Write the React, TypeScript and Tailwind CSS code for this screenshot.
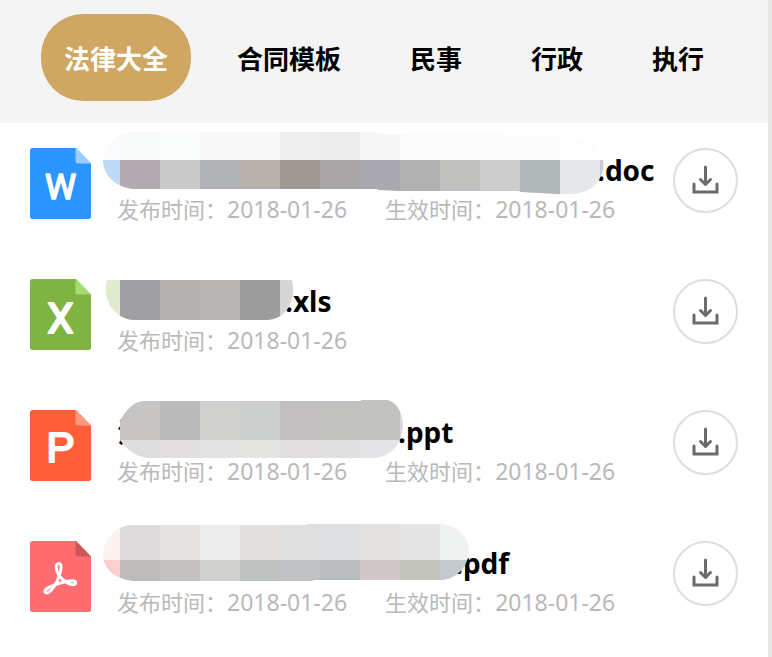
import { useId, useState } from "react";

type Kind = "doc" | "xls" | "ppt" | "pdf";

type Band = { y: number; height: number; colors: string[] };

type Mosaic = {
  x: number;
  y: number;
  width: number;
  outline: string;
  bands: Band[];
};

type LegalFile = {
  kind: Kind;
  lead?: string;
  published: string;
  effective?: string;
  mosaic: Mosaic;
};

const TABS = ["法律大全", "合同模板", "民事", "行政", "执行"];

const FILES: LegalFile[] = [
  {
    kind: "doc",
    published: "2018-01-26",
    effective: "2018-01-26",
    mosaic: {
      x: 103,
      y: 132,
      width: 501,
      outline:
        "M103 162C103 145 118 132 134 132H375L384 134H404L410 135H500L575 138C590 139 599 148 603 160C606 178 592 194 572 194L558 194L521 192L518 191H400L378 190V189H133C116 187 104 176 103 162Z",
      bands: [
        {
          y: 130,
          height: 30,
          colors: ["#fafbfd", "#fafbfd", "#f8f9f9", "#fafdfb", "#f8f8f8", "#f8f8f8", "#efefef", "#ededed", "#f7f7f7", "#fbfbfb", "#fbfbfb", "#fbfbfb", "#fcfcfc", "#fdfdfd"].slice(1),
        },
        {
          y: 160,
          height: 40,
          colors: ["#bfdaf7", "#b1abaf", "#c9c9c9", "#b1b2b5", "#b6b1ab", "#a09a95", "#a8a5a6", "#aaa9af", "#b0b0b0", "#c0c0be", "#cdcdcd", "#b0b5b8", "#e6e7e9", "#cccccc"],
        },
      ],
    },
  },
  {
    kind: "xls",
    published: "2018-01-26",
    mosaic: {
      x: 105,
      y: 263,
      width: 189,
      outline: "M107 280H292C296 296 290 318 268 320H132C113 317 102 300 107 280Z",
      bands: [
        {
          y: 280,
          height: 40,
          colors: ["#e0ebd0", "#9f9fa1", "#b1b0ae", "#b5b4b2", "#9d9d9d", "#d6d6d6"],
        },
      ],
    },
  },
  {
    kind: "ppt",
    lead: "法",
    published: "2018-01-26",
    effective: "2018-01-26",
    mosaic: {
      x: 119,
      y: 394,
      width: 284,
      outline:
        "M120 421C126 409 134 402 143 401H360L362 400H388C397 403 403 413 403 426C402 443 392 456 376 458H148C136 457 126 449 120 440Z",
      bands: [
        {
          y: 400,
          height: 40,
          colors: ["#c6c5c3", "#c6c5c3", "#bababa", "#d0d0ce", "#cdcfce", "#c1bfbf", "#c1c1bf", "#c2c2bf", "#d8d8d8"],
        },
        {
          y: 440,
          height: 20,
          colors: ["#dddddd", "#dddddd", "#e1dfe0", "#e3e3e3", "#e5e5e3", "#e0dedf", "#e0e0e0", "#e5e5e7", "#e5e5e7"],
        },
      ],
    },
  },
  {
    kind: "pdf",
    published: "2018-01-26",
    effective: "2018-01-26",
    mosaic: {
      x: 103,
      y: 525,
      width: 367,
      outline:
        "M103 554C104 538 116 526 131 525H306L308 524H442C460 526 470 539 469 553C467 567 457 579 442 580H314L312 581H133C115 579 103 569 103 554Z",
      bands: [
        {
          y: 520,
          height: 40,
          colors: ["#fcf2f1", "#dcdadb", "#e5e4e2", "#ececec", "#e1e0de", "#dfdfdf", "#dfe0e2", "#e3e2e0", "#e6e6e6", "#f0f2f1"],
        },
        {
          y: 560,
          height: 24,
          colors: ["#fdcfcf", "#bdbcba", "#c3c1c0", "#d0d0ce", "#bdc1c0", "#c1c2c4", "#b9bdc0", "#cec9c8", "#c4c4bf", "#c6c9ce"],
        },
      ],
    },
  },
];

const LEADING: Record<Kind, string> = {
  doc: "-ml-[14px] -mr-[7px]",
  xls: "-ml-[12px] -mr-[9px]",
  ppt: "-ml-[26px] -mr-[5px]",
  pdf: "-ml-[14px] -mr-[15px]",
};

const PAGE: Record<Kind, { body: string; fold: string }> = {
  doc: { body: "#2b96ff", fold: "#99ceff" },
  xls: { body: "#7fb442", fold: "#a8dc70" },
  ppt: { body: "#ff5e3a", fold: "#ff9880" },
  pdf: { body: "#ff6d70", fold: "#cc5659" },
};

function Redaction({ mosaic, className }: { mosaic: Mosaic; className: string }) {
  const clip = useId();
  return (
    <svg
      aria-hidden="true"
      className={`relative z-10 -mt-[18px] h-16 shrink-0 overflow-visible ${className}`}
      width={mosaic.width}
      height={64}
      viewBox={`${mosaic.x} ${mosaic.y} ${mosaic.width} 64`}
      shapeRendering="crispEdges"
    >
      <clipPath id={clip}>
        <path d={mosaic.outline} />
      </clipPath>
      <g clipPath={`url(#${clip})`}>
        {mosaic.bands.map((band) =>
          band.colors.map((color, i) => (
            <rect key={`${band.y}-${i}`} x={80 + i * 40} y={band.y} width={40} height={band.height} fill={color} />
          )),
        )}
      </g>
    </svg>
  );
}

function FileIcon({ kind }: { kind: Kind }) {
  const { body, fold } = PAGE[kind];
  return (
    <svg aria-hidden="true" className="shrink-0" width="61" height="71" viewBox="0 0 61 71">
      <path d="M2.5 0H46L61 15.5V68.5A2.5 2.5 0 0 1 58.5 71H2.5A2.5 2.5 0 0 1 0 68.5V2.5A2.5 2.5 0 0 1 2.5 0Z" fill={body} />
      <path d="M45.5 0H46L61 15.5H48A2.5 2.5 0 0 1 45.5 13Z" fill={fold} />
      <g fill="#fff" stroke="#fff" strokeLinejoin="round" textAnchor="middle">
        {kind === "doc" && (
          <text x="30.5" y="51" fontSize="35" fontFamily="Roboto, sans-serif" strokeWidth="1.6">W</text>
        )}
        {kind === "xls" && (
          <text x="30.5" y="54" fontSize="42" fontFamily="Roboto, sans-serif" strokeWidth="2">X</text>
        )}
        {kind === "ppt" && (
          <text x="30.5" y="52" fontSize="43" fontFamily="Liberation Sans, sans-serif" strokeWidth="2">P</text>
        )}
      </g>
      {kind === "pdf" && (
        <path
          d="M28.7 34C26 29 25 22.5 28.7 22.5C32.5 22.5 31 29 29.5 34C27.5 41 22.5 49 18.5 51.5C15.5 53 13.5 50.5 16.5 48C20.5 45 30 42 37.5 40.3C43 39 46 40 45.6 42C45 44.3 40 44 36 41C33 38.8 30 36.5 28.7 34Z"
          fill="none"
          stroke="#fff"
          strokeWidth="3"
          strokeLinejoin="round"
        />
      )}
    </svg>
  );
}

function DownloadIcon() {
  return (
    <svg
      aria-hidden="true"
      width="27"
      height="31"
      viewBox="0 0 27 31"
      fill="none"
      stroke="#6b6b6b"
      strokeWidth="3"
      strokeLinecap="round"
      strokeLinejoin="round"
    >
      <path d="M13.5 2V19.5M8.5 14.5L13.5 19.5L18.5 14.5" />
      <path d="M2 19V27H25V19" strokeLinejoin="miter" />
    </svg>
  );
}

function Meta({ label, date }: { label: string; date: string }) {
  return (
    <span className="flex items-baseline">
      <span className="text-[22px]">{label}：</span>
      <time dateTime={date} className="text-[23px]">{date}</time>
    </span>
  );
}

export default function App() {
  const [active, setActive] = useState(TABS[0]);

  return (
    <div className="min-h-screen border-r-4 border-[#e8e8e4] bg-white font-['Noto_Sans','Noto_Sans_CJK_SC',sans-serif]">
      <nav className="flex justify-between bg-[#f4f4f4] px-[41px] pt-[14px] pb-[22px]">
        {TABS.map((tab) => (
          <button
            key={tab}
            type="button"
            onClick={() => setActive(tab)}
            className={`h-[87px] rounded-[42px] px-[23px] pt-1 text-[26px] font-bold whitespace-nowrap ${
              tab === active ? "bg-[#d0a762] text-white" : "text-black"
            }`}
          >
            {tab}
          </button>
        ))}
      </nav>

      <ul className="flex flex-col gap-[54px] px-[30px] pt-[25px] pb-8">
        {FILES.map((file) => (
          <li key={file.kind} className="flex items-start">
            <FileIcon kind={file.kind} />
            <div className="ml-[26px] min-w-0 flex-1 pt-[2px]">
              <h2 className="flex h-10 items-start text-[28px] leading-10 font-bold text-black">
                {file.lead && <span>{file.lead}</span>}
                <Redaction mosaic={file.mosaic} className={LEADING[file.kind]} />
                <span>.{file.kind}</span>
              </h2>
              <p className="mt-[3px] flex h-8 gap-[38px] leading-8 whitespace-nowrap text-[#b9b9b9]">
                <Meta label="发布时间" date={file.published} />
                {file.effective && <Meta label="生效时间" date={file.effective} />}
              </p>
            </div>
            <button
              type="button"
              aria-label={`下载 ${file.kind}`}
              className="flex size-[65px] shrink-0 items-center justify-center rounded-full border-2 border-[#dedede] bg-white"
            >
              <DownloadIcon />
            </button>
          </li>
        ))}
      </ul>
    </div>
  );
}
